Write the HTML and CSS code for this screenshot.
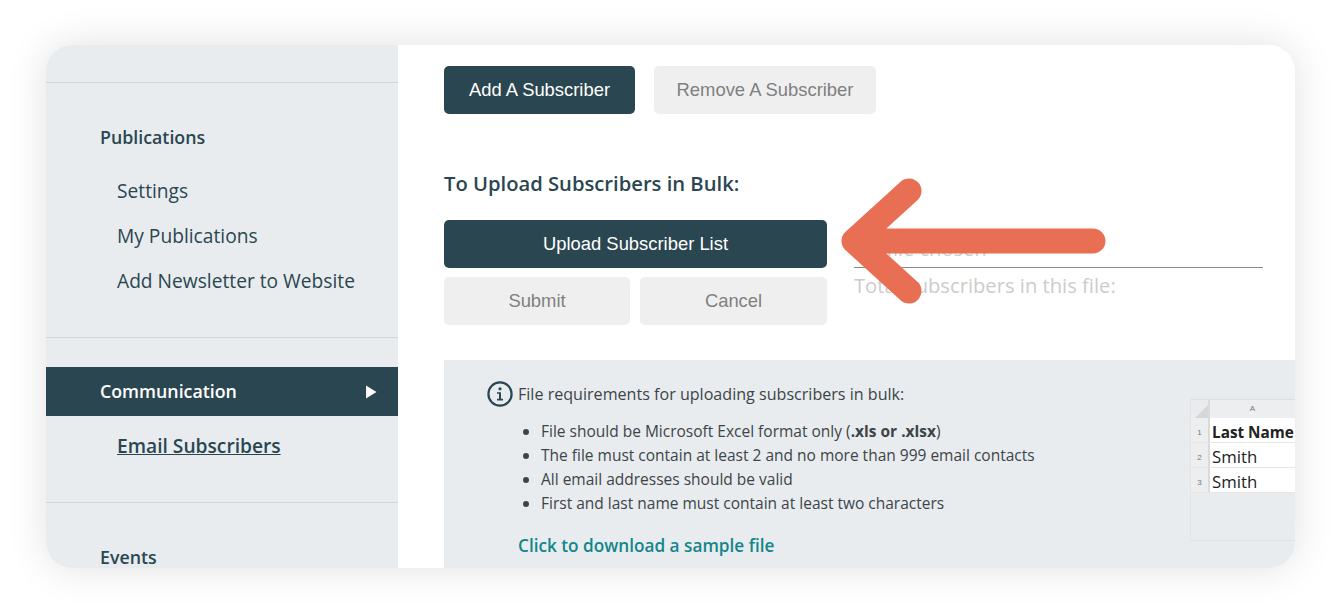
FILE: index.html
```html
<!DOCTYPE html>
<html lang="en">
<head>
<meta charset="utf-8">
<title>Email Subscribers</title>
<link rel="stylesheet" href="styles.css">
</head>
<body>
<div class="card">
  <aside class="sidebar">
    <section class="group group-pub">
      <div class="group-title">Publications</div>
      <a class="nav-link">Settings</a>
      <a class="nav-link">My Publications</a>
      <a class="nav-link">Add Newsletter to Website</a>
    </section>
    <section class="group group-comm">
      <div class="active-row"><span class="active-label">Communication</span><svg class="caret" width="12" height="14" viewBox="0 0 12 14"><path d="M1 0.5 L11.5 7 L1 13.5 Z" fill="#fff"/></svg></div>
      <a class="nav-link current">Email Subscribers</a>
    </section>
    <section class="group group-events">
      <div class="group-title">Events</div>
    </section>
  </aside>
  <main class="main">
    <div class="top-actions">
      <button class="btn primary add">Add A Subscriber</button>
      <button class="btn muted remove">Remove A Subscriber</button>
    </div>
    <h2 class="heading">To Upload Subscribers in Bulk:</h2>
    <div class="upload">
      <div class="upload-btns">
        <button class="btn primary wide">Upload Subscriber List</button>
        <div class="pair">
          <button class="btn muted submit">Submit</button>
          <button class="btn muted cancel">Cancel</button>
        </div>
      </div>
      <div class="file-info">
        <div class="file-name">No file chosen</div>
        <div class="file-total">Total subscribers in this file:</div>
      </div>
    </div>
    <section class="panel">
      <div class="req">
        <div class="req-title">
          <svg class="info" width="28" height="28" viewBox="0 0 28 28"><circle cx="14" cy="14" r="11.6" fill="none" stroke="#2a4650" stroke-width="2.2"/><circle cx="14" cy="8.8" r="1.6" fill="#2a4650"/><path d="M11 12.2h4v6.6h2v1.6h-6v-1.6h2v-5h-2z" fill="#2a4650"/></svg>
          <span>File requirements for uploading subscribers in bulk:</span>
        </div>
        <ul class="req-list">
          <li>File should be Microsoft Excel format only (<b>.xls or .xlsx</b>)</li>
          <li>The file must contain at least 2 and no more than 999 email contacts</li>
          <li>All email addresses should be valid</li>
          <li>First and last name must contain at least two characters</li>
        </ul>
        <a class="sample">Click to download a sample file</a>
      </div>
      <div class="sheet">
        <div class="sheet-head"><div class="corner"><svg width="14" height="14" viewBox="0 0 14 14"><path d="M14 1V14H1Z" fill="#d5d8da"/></svg></div><div class="col">A</div></div>
        <div class="sheet-row"><div class="num">1</div><div class="cell strong">Last Name</div></div>
        <div class="sheet-row"><div class="num">2</div><div class="cell">Smith</div></div>
        <div class="sheet-row"><div class="num">3</div><div class="cell">Smith</div></div>
      </div>
    </section>
  </main>
  <svg class="arrow" width="270" height="130" viewBox="0 0 270 130"><path d="M68 13 L13 63 L68 113 M13 63 H252" fill="none" stroke="#e96f54" stroke-width="25" stroke-linecap="round" stroke-linejoin="round"/></svg>
</div>
</body>
</html>
```
FILE: styles.css
```css
* { box-sizing: border-box; }
html, body { margin: 0; height: 100%; background: #fff; }
body { padding: 45px 45px 46px 46px; overflow: hidden; font-family: "Open Sans", sans-serif; }
.card {
  position: relative;
  display: flex;
  width: 1249px;
  height: 523px;
  border-radius: 26px;
  overflow: hidden;
  background: #fff;
  box-shadow: 0 0 40px rgba(0,0,0,.12);
}
.sidebar { flex: 0 0 352px; background: #e8ecef; padding-top: 37px; color: #2a4650; }
.group { border-top: 1px solid #d1d6da; }
.group-pub { height: 255px; padding-top: 41px; }
.group-comm { height: 165px; padding-top: 29px; }
.group-events { padding-top: 41px; }
.group-title { font-size: 17.8px; font-weight: 600; line-height: 26px; padding-left: 54px; margin-bottom: 26px; }
.nav-link { display: block; font-size: 19.2px; line-height: 30px; margin: 0 0 14.8px 71px; }
.nav-link.current { font-weight: 600; text-decoration: underline; margin-top: 15px; }
.active-row {
  display: flex; align-items: center; justify-content: space-between;
  height: 49px; background: #2a4650; color: #fff;
  padding: 0 21px 0 54px;
  font-size: 17.8px; font-weight: 600;
}
.active-label { margin-bottom: 2px; }
.main { flex: 1; min-width: 0; display: flex; flex-direction: column; padding-top: 21px; }
.top-actions, .heading, .upload, .panel { margin-left: 46px; }
.top-actions { display: flex; gap: 19px; }
.btn { border: 0; border-radius: 5px; height: 48px; font-family: "Liberation Sans", Arial, sans-serif; font-size: 18.4px; padding: 0; }
.primary { background: #2a4650; color: #fff; }
.muted { background: #efefef; color: #808080; }
.add { width: 191px; }
.remove { width: 222px; }
.heading { margin-top: 56px; margin-bottom: 0; font-size: 20.2px; line-height: 26px; font-weight: 600; color: #2a4650; }
.upload { display: flex; gap: 27px; margin-top: 24px; }
.upload-btns { width: 383px; display: flex; flex-direction: column; gap: 9px; }
.wide { width: 100%; }
.pair { display: flex; gap: 10px; }
.submit { width: 186px; }
.cancel { width: 187px; }
.file-info { width: 409px; }
.file-name { height: 48px; border-bottom: 1px solid #8a8a8a; font-size: 20px; line-height: 58px; color: #ccc; }
.file-total { font-size: 20.2px; line-height: 26px; color: #ccc; margin-top: 4px; }
.panel { margin-top: 35px; flex: 1; background: #e8ecef; position: relative; display: flex; justify-content: space-between; }
.req { padding: 20px 0 0 42px; color: #3d4448; }
.req-title { display: flex; align-items: center; gap: 4px; font-size: 16.1px; line-height: 28px; }
.req-list { margin: 11px 0 0; padding: 0 0 0 55px; list-style: disc; font-size: 15.5px; line-height: 24px; }
.sample { display: block; margin: 18px 0 0 32px; font-size: 17.2px; line-height: 26px; font-weight: 600; color: #12868a; }
.sheet { position: absolute; left: 746px; top: 39px; width: 105px; height: 142px; border-bottom: 1px solid #dfe2e4; border-left: 1px solid #e2e5e7; }
.sheet-head { display: flex; height: 19px; background: #eceeef; border-top: 1px solid #dcdfe1; }
.corner { width: 19px; background: #e9ebed; border-right: 2px solid #d8dadc; padding: 1px 0 0 3px; }
.col { flex: 1; text-align: center; font: 8px/18px "Liberation Sans", sans-serif; color: #777; }
.sheet-row { display: flex; height: 25px; background: #fff; border-bottom: 1px solid #e6e6e6; }
.num { width: 19px; flex: none; background: #eceeef; border-right: 2px solid #d8dadc; font: 8px/30px "Liberation Sans", sans-serif; color: #777; text-align: center; }
.cell { padding-left: 2px; font-size: 16.8px; line-height: 28px; color: #222; white-space: nowrap; }
.cell.strong { font-size: 15.3px; font-weight: 700; }
.arrow { position: absolute; left: 795px; top: 133px; }
```
